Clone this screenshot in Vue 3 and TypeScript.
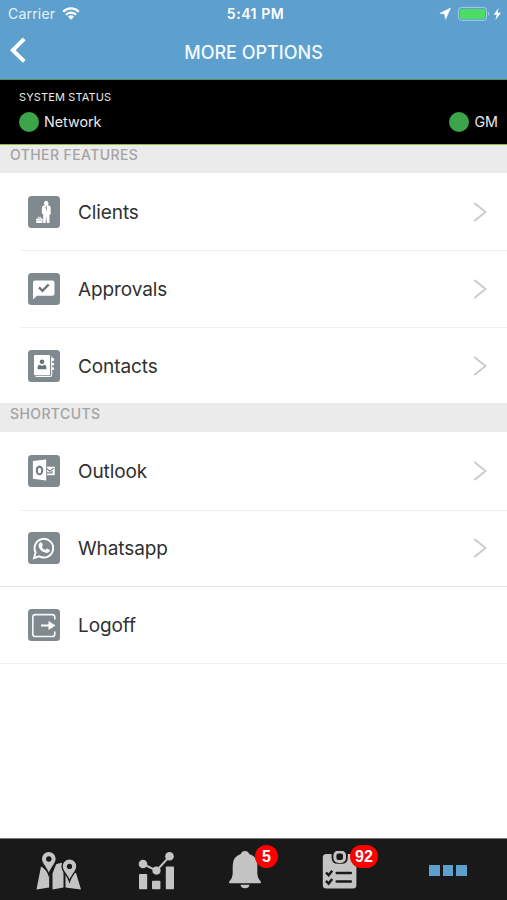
<script setup lang="ts">
interface Item { label: string; icon: string; chevron: boolean }
interface Section { title: string; items: Item[] }

const sections: Section[] = [
  {
    title: 'OTHER FEATURES',
    items: [
      { label: 'Clients', icon: 'clients', chevron: true },
      { label: 'Approvals', icon: 'approvals', chevron: true },
      { label: 'Contacts', icon: 'contacts', chevron: true },
    ],
  },
  {
    title: 'SHORTCUTS',
    items: [
      { label: 'Outlook', icon: 'outlook', chevron: true },
      { label: 'Whatsapp', icon: 'whatsapp', chevron: true },
      { label: 'Logoff', icon: 'logoff', chevron: false },
    ],
  },
]
</script>

<template>
  <div class="screen">
    <header class="header">
      <div class="statusbar">
        <div class="carrier">
          <span>Carrier</span>
          <svg class="wifi" width="18" height="13" viewBox="0 0 18 13">
            <path d="M1.2 4.7a11 11 0 0 1 15.6 0M4 7.7a7 7 0 0 1 10 0" fill="none" stroke="#fff" stroke-width="2.3" />
            <path d="M6 9.7a4.3 4.3 0 0 1 6 0L9 12.7z" fill="#fff" />
          </svg>
        </div>
        <div class="clock">5:41 PM</div>
        <div class="power">
          <svg width="64" height="16" viewBox="0 0 64 16">
            <path d="M11.6 2 .8 7.3l4.8.8 1 5.2z" fill="#fff" stroke="#fff" stroke-width=".5" stroke-linejoin="round" />
            <rect x="19.5" y="1.4" width="28" height="13" rx="3" fill="none" stroke="#a5cdec" />
            <rect x="21" y="3" width="25" height="10" rx="1.5" fill="#4cdb63" />
            <path d="M49.2 5.7a2.3 2.3 0 0 1 0 4z" fill="#a5cdec" />
            <path d="M59.6 2 54.6 8.7h3.2L56.4 14l5.6-7.2h-3.4z" fill="#fff" />
          </svg>
        </div>
      </div>
      <div class="navbar">
        <svg class="back" width="18" height="28" viewBox="0 0 18 28">
          <path d="M16.2 2.8 4.8 14.3 16.2 25.4" fill="none" stroke="#fff" stroke-width="4" />
        </svg>
        <h1>MORE OPTIONS</h1>
      </div>
    </header>

    <section class="system">
      <div class="system-title">SYSTEM STATUS</div>
      <div class="system-row">
        <span class="state"><i class="dot"></i><span class="network">Network</span></span>
        <span class="state"><i class="dot"></i><span class="gm">GM</span></span>
      </div>
    </section>

    <main class="content">
      <section v-for="section in sections" :key="section.title">
        <h2 :class="section.title === 'SHORTCUTS' ? 'shortcuts' : 'features'">{{ section.title }}</h2>
        <div v-for="item in section.items" :key="item.label" class="row" :class="item.icon">
          <svg class="icon" width="32" height="32" viewBox="0 0 32 32">
            <rect width="32" height="32" rx="3.5" fill="#7f898e" />
            <g v-if="item.icon === 'clients'" fill="#fff">
              <ellipse cx="18.2" cy="7.2" rx="2.2" ry="2.5" />
              <path d="M15.8 9.3h4.8q2.1.5 2.1 2.8v6.4h-1.2V27h-2.7l-.6-7.5-.6 7.5h-2.4v-9h-1.3v-6q0-2.2 1.9-2.7z" />
              <path d="M18.2 10l-.7 1 .7 4.8.7-4.8z" fill="#7f898e" />
              <rect x="8.2" y="22.5" width="6.4" height="4.5" rx=".7" />
              <path d="M10.2 22.5v-1.2h2.6v1.2" fill="none" stroke="#fff" stroke-width=".8" />
              <path d="M8.2 24.4h6.6" stroke="#aab1b4" stroke-width=".6" />
            </g>
            <g v-else-if="item.icon === 'approvals'">
              <path d="M7 7.5h17.5q2 0 2 2v11.3q0 2-2 2H8.9L5 26.5v-17q0-2 2-2z" fill="#fff" />
              <path d="M11 14.4l3.5 3.4 6.2-6.3" fill="none" stroke="#69747a" stroke-width="2.4" />
            </g>
            <g v-else-if="item.icon === 'contacts'">
              <path d="M7.5 26.5H22q1.7 0 1.7-1.7V6.6" fill="none" stroke="#fff" stroke-width="1.1" />
              <rect x="6" y="5" width="16" height="20.2" rx="1" fill="#fff" />
              <circle cx="14" cy="11.8" r="2.3" fill="#687379" />
              <path d="M9.6 19.2V17q0-1.7 2.2-2.3l2.2 1.2 2.2-1.2q2.2.6 2.2 2.3v2.2z" fill="#687379" />
              <path d="M23.7 9.5h2.4M23.7 14.2h2.4M23.7 18.7h2.4" stroke="#fff" stroke-width="2.3" />
            </g>
            <g v-else-if="item.icon === 'outlook'">
              <path d="M4.9 6.1 18.2 4.5v20.9L4.9 23.7z" fill="#fff" />
              <ellipse cx="11.5" cy="15.4" rx="2.7" ry="3.8" fill="none" stroke="#737e84" stroke-width="2.1" />
              <rect x="19.1" y="11.7" width="7.6" height="8.5" fill="#fff" />
              <path d="M19 13.8l2.7 2.4 4-3M19 17.9h5v-2" fill="none" stroke="#7f898e" stroke-width="1.3" />
            </g>
            <g v-else-if="item.icon === 'whatsapp'">
              <path d="M6 26l1.6-5.6a9.3 9.3 0 1 1 3.8 3.9z" fill="none" stroke="#fff" stroke-width="1.9" />
              <path d="M12 10.5q1-.8 1.8.2l1.2 2.5-1.2 1.7q1.2 2.2 3.5 3.1l1.4-1.5 2.8 1.3q.9.6 0 1.8-1.8 2-4.4 1-4.7-1.7-6.4-5.7-.8-2.7 1.3-4.4z" fill="#fff" />
            </g>
            <g v-else>
              <path d="M26.8 10.5V8.2q0-2.6-2.6-2.6H7.4q-2.6 0-2.6 2.6v16.7q0 2.6 2.6 2.6h16.8q2.6 0 2.6-2.6v-2.3" fill="none" stroke="#f3f8fa" stroke-width="1.6" />
              <path d="M13 16.5h8.5" stroke="#fff" stroke-width="2" />
              <path d="M20.5 12l7 4.5-7 4.5z" fill="#fff" />
            </g>
          </svg>
          <span class="label">{{ item.label }}</span>
          <svg v-if="item.chevron" class="chevron" width="16" height="20" viewBox="0 0 16 20">
            <path d="M1.3 1 12.6 10 1.3 19" fill="none" stroke="#c8c8c8" stroke-width="1.7" />
          </svg>
        </div>
      </section>
    </main>

    <nav class="tabs">
      <div class="tab">
        <svg width="46" height="40" viewBox="0 0 46 40" fill="#c4c4c4">
          <path d="M5 15.5 0.5 38.5 13.2 36.5V23.5Q8 17 5 15.5z" />
          <path d="M16.5 22.5 20 13.5q3-2.2 7.5-1.3v24.3L16.5 38.5z" />
          <path d="M29.5 20 40 22l5 16.5-15.5-2z" />
          <g stroke="#191919" stroke-width="1.4">
            <path d="M12.8.2a7.5 7.5 0 0 0-7.5 7.7c0 5 5.5 8.8 7.5 15.8 2-7 7.5-10.8 7.5-15.8A7.5 7.5 0 0 0 12.8.2z" />
            <path d="M33.5 7.8a7.4 7.4 0 0 0-7.4 7.6c0 5 5.5 8.6 7.4 14.9 1.9-6.3 7.4-9.9 7.4-14.9a7.4 7.4 0 0 0-7.4-7.6z" />
          </g>
          <circle cx="12.8" cy="8" r="2.7" fill="#191919" /><circle cx="33.5" cy="15.4" r="2.6" fill="#191919" />
        </svg>
      </div>
      <div class="tab">
        <svg width="37" height="40" viewBox="0 0 37 40" fill="#c4c4c4">
          <path d="M5 13 18.5 19.6 31.5 5.5" fill="none" stroke="#c4c4c4" stroke-width="2" />
          <circle cx="5" cy="13" r="4.3" /><circle cx="18.5" cy="19.6" r="4.1" /><circle cx="31.5" cy="5.3" r="4.3" />
          <rect x="1" y="23" width="8.2" height="15.2" rx=".7" /><rect x="14" y="29.8" width="8.4" height="8.4" rx=".7" /><rect x="27.8" y="15.5" width="8.2" height="22.7" rx=".7" />
        </svg>
      </div>
      <div class="tab">
        <svg width="32" height="40" viewBox="0 0 32 40" fill="#c4c4c4">
          <path d="M16 .1q3.2 0 4.2 3 8.1 2.5 8.1 11.4v7.6q0 5 3.5 8.4v1.7H.2v-1.7q3.5-3.4 3.5-8.4v-7.6q0-8.9 8.1-11.4 1-3 4.2-3z" />
          <path d="M11.5 33.7h9q-.5 3.6-4.5 3.6t-4.5-3.6z" />
        </svg>
        <span class="badge bell-badge">5</span>
      </div>
      <div class="tab">
        <svg width="36" height="40" viewBox="0 0 36 40">
          <rect x=".8" y="3" width="33.6" height="34.5" rx="3.5" fill="#c4c4c4" />
          <path d="M9.6 0v6.5q0 6.3 6 6.3h4.2q6 0 6-6.3V0z" fill="#191919" />
          <rect x="12.9" y="1" width="9.6" height="9.4" rx="3.4" fill="#191919" stroke="#c4c4c4" stroke-width="3" />
          <g fill="none" stroke="#191919" stroke-width="2.5">
            <path d="M4 21.5l2.6 2.7 3.6-4.5M4 29.8l2.6 2.7 3.6-4.5" />
            <path d="M14.8 22h14M14.8 30.5h14" stroke-width="2.7" stroke-linecap="round" />
          </g>
        </svg>
        <span class="badge list-badge">92</span>
      </div>
      <div class="tab more"><i></i><i></i><i></i></div>
    </nav>
  </div>
</template>

<style>
body { margin: 0; background: #fff; }
</style>

<style scoped>
* { box-sizing: border-box; }
.screen { width: 507px; height: 900px; display: flex; flex-direction: column; overflow: hidden; background: #fff; font-family: Inter, "Liberation Sans", sans-serif; }
svg { display: block; flex: none; }
.header { height: 80px; background: #5d9fcd; color: #fff; border-bottom: 1px solid #568d63; flex: none; }
.statusbar { height: 27px; display: grid; grid-template-columns: 1fr auto 1fr; align-items: center; padding: 0 4px 0 8px; }
.carrier { display: flex; align-items: center; gap: 7px; font-size: 14px; color: #e5f2fc; letter-spacing: .2px; }
.clock { font-size: 14px; font-weight: 600; letter-spacing: .55px; }
.power { justify-self: end; }
.navbar { height: 50px; display: grid; grid-template-columns: 18px 1fr 18px; align-items: center; padding: 0 8px; }
.back { margin-top: -5px; }
h1 { margin: 1px 0 0; text-align: center; font-size: 18px; font-weight: 500; line-height: 24px; letter-spacing: 0; color: #f4faff; }
.system { height: 65px; flex: none; background: #000; color: #e9e9e9; padding: 11px 9px 0 19px; border-bottom: 1px solid #91bd45; }
.system-title { font-size: 11px; line-height: 13px; letter-spacing: .13px; }
.system-row { display: flex; justify-content: space-between; margin-top: 8px; }
.state { display: flex; align-items: center; gap: 5px; font-size: 14.3px; line-height: 20px; }
.dot { width: 20px; height: 20px; margin-top: -1px; border-radius: 50%; background: #3da549; }
.content { flex: 1; }
h2 { margin: 0; height: 28px; padding-left: 10px; background: #ebebeb; color: #a3a3a3; font-size: 14px; font-weight: 500; line-height: 20px; letter-spacing: .4px; }
h2.shortcuts { height: 29px; line-height: 22px; }
.row { height: 77px; display: flex; align-items: center; margin-left: 20px; padding: 0 20px 1px 8px; border-bottom: 1px solid #eee; }
.row.clients { height: 78px; padding-bottom: 0; }
.row.contacts { height: 75px; border: 0; padding-bottom: 0; }
.row.outlook { height: 79px; padding-bottom: 0; }
.row.whatsapp, .row.logoff { margin-left: 0; padding-left: 28px; }
.row.whatsapp { height: 76px; border-color: #e3e3e3; }
.label { margin: 2px 0 0 18px; font-size: 19px; line-height: 26px; letter-spacing: -.1px; color: #303030; flex: 1; }
.contacts .label { margin-top: 3px; }
.chevron { margin-right: -2px; }
.tabs { height: 62px; flex: none; display: grid; grid-template-columns: 102px 91px 93px 107px 38px; padding: 12px 0 0 36px; background: #191919; border-top: 1px solid #777; }
.tab { position: relative; }
.badge { position: absolute; height: 23px; border-radius: 12px; background: #fe0000; color: #fff; font: 700 16px/23px "Liberation Sans", sans-serif; text-align: center; }
.bell-badge { left: 26px; top: -6px; width: 23px; }
.list-badge { left: 28px; top: -6px; width: 28px; }
.more { display: flex; gap: 3px; padding-top: 14px; }
.more i { width: 11px; height: 11px; background: #5d9fcd; }
</style>
